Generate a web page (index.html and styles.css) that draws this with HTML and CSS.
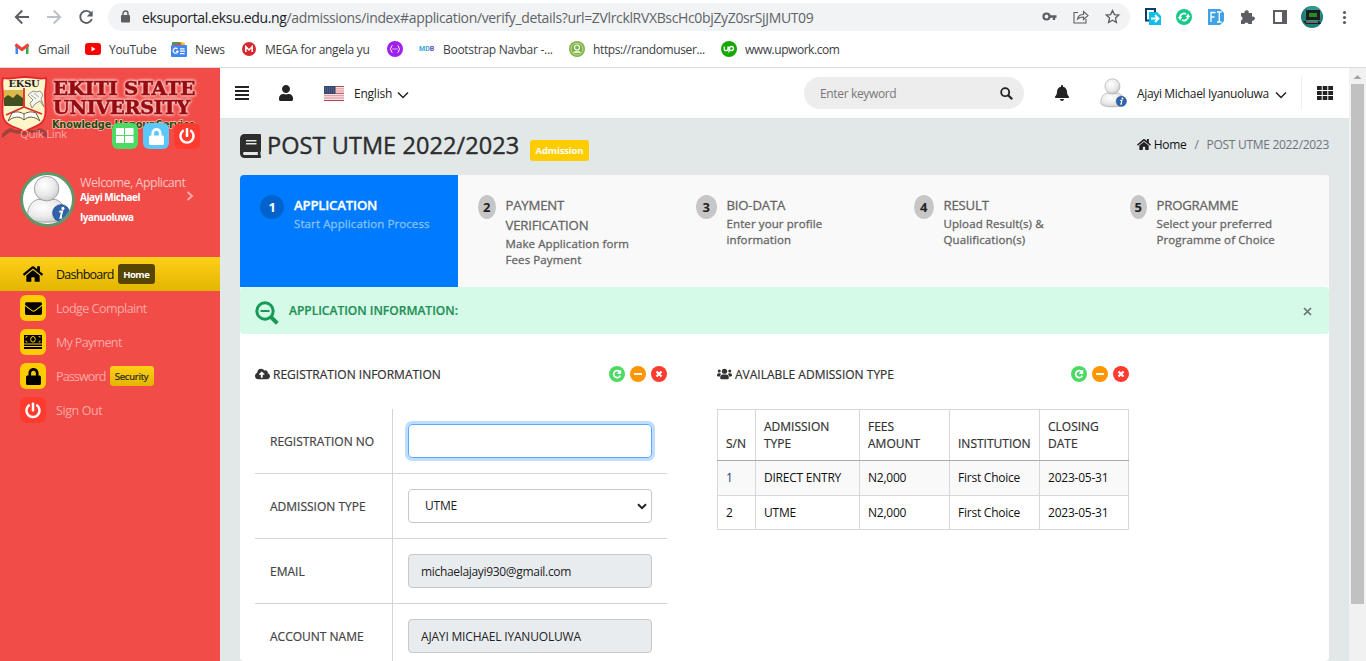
FILE: index.html
```html
<!DOCTYPE html>
<html lang="en">
<head>
<meta charset="utf-8">
<title>POST UTME 2022/2023</title>
<link rel="stylesheet" href="styles.css">
</head>
<body>
<svg class="defs" width="0" height="0">
  <symbol id="home" viewBox="0 0 576 512"><path d="M280.37 148.26L96 300.11V464a16 16 0 0 0 16 16l112.06-.29a16 16 0 0 0 15.92-16V368a16 16 0 0 1 16-16h64a16 16 0 0 1 16 16v95.64a16 16 0 0 0 16 16.05L464 480a16 16 0 0 0 16-16V300L295.67 148.26a12.19 12.19 0 0 0-15.3 0zM571.6 251.47L488 182.56V44.05a12 12 0 0 0-12-12h-56a12 12 0 0 0-12 12v72.61L318.47 43a48 48 0 0 0-61 0L4.34 251.47a12 12 0 0 0-1.6 16.9l25.5 31A12 12 0 0 0 45.15 301l235.22-193.74a12.19 12.19 0 0 1 15.3 0L530.9 301a12 12 0 0 0 16.9-1.6l25.5-31a12 12 0 0 0-1.7-16.93z"/></symbol>
  <symbol id="envelope" viewBox="0 0 512 512"><path d="M502.3 190.8c3.9-3.1 9.7-.2 9.7 4.7V400c0 26.5-21.5 48-48 48H48c-26.5 0-48-21.5-48-48V195.6c0-5 5.7-7.8 9.7-4.7 22.4 17.4 52.1 39.5 154.1 113.6 21.1 15.4 56.7 47.8 92.2 47.6 35.7.3 72-32.8 92.3-47.6 102-74.1 131.6-96.3 154-113.7zM256 320c23.2.4 56.6-29.2 73.4-41.4 132.7-96.3 142.8-104.7 173.4-128.7 5.8-4.5 9.2-11.5 9.2-18.9v-19c0-26.5-21.5-48-48-48H48c-26.5 0-48 21.5-48 48v19c0 7.4 3.4 14.3 9.2 18.9 30.6 23.9 40.7 32.4 173.4 128.7 16.8 12.2 50.2 41.8 73.4 41.4z"/></symbol>
  <symbol id="lock" viewBox="0 0 448 512"><path d="M400 224h-24v-72C376 68.2 307.8 0 224 0S72 68.2 72 152v72H48c-26.5 0-48 21.5-48 48v192c0 26.5 21.5 48 48 48h352c26.5 0 48-21.5 48-48V272c0-26.5-21.5-48-48-48zm-104 0H152v-72c0-39.7 32.3-72 72-72s72 32.3 72 72v72z"/></symbol>
  <symbol id="power" viewBox="0 0 512 512"><path d="M400 54.1c63 45 104 118.6 104 201.9 0 136.8-110.8 247.7-247.5 248C120 504.3 8.2 393 8 256.4 7.9 173.1 48.9 99.3 111.8 54.2c11.7-8.3 28-4.8 35 7.7L162.6 90c5.9 10.5 3.1 23.8-6.6 31-41.5 30.8-68 79.6-68 134.9-.1 92.3 74.5 168.1 168 168.1 91.6 0 168.6-74.2 168-169.1-.3-51.8-24.7-101.8-68.1-134-9.7-7.2-12.4-20.5-6.5-30.9l15.8-28.1c7-12.4 23.2-16.1 34.8-7.8zM296 264V24c0-13.3-10.7-24-24-24h-32c-13.3 0-24 10.7-24 24v240c0 13.3 10.7 24 24 24h32c13.3 0 24-10.7 24-24z"/></symbol>
  <symbol id="user" viewBox="0 0 448 512"><path d="M224 256c70.7 0 128-57.3 128-128S294.7 0 224 0 96 57.3 96 128s57.3 128 128 128zm89.6 32h-16.7c-22.2 10.2-46.9 16-72.9 16s-50.6-5.8-72.9-16h-16.7C60.2 288 0 348.2 0 422.4V464c0 26.5 21.5 48 48 48h352c26.5 0 48-21.5 48-48v-41.6c0-74.2-60.2-134.4-134.4-134.4z"/></symbol>
  <symbol id="bell" viewBox="0 0 448 512"><path d="M224 512c35.32 0 63.97-28.65 63.97-64H160.03c0 35.35 28.65 64 63.97 64zm215.39-149.71c-19.32-20.76-55.47-51.99-55.47-154.29 0-77.7-54.48-139.9-127.94-155.16V32c0-17.67-14.32-32-31.98-32s-31.98 14.33-31.98 32v20.84C118.56 68.1 64.08 130.3 64.08 208c0 102.3-36.15 133.53-55.47 154.29-6 6.45-8.66 14.16-8.61 21.71.11 16.4 12.98 32 32.1 32h383.8c19.12 0 32-15.6 32.1-32 .05-7.55-2.61-15.27-8.61-21.71z"/></symbol>
  <symbol id="book" viewBox="0 0 448 512"><path d="M448 360V24c0-13.3-10.7-24-24-24H96C43 0 0 43 0 96v320c0 53 43 96 96 96h328c13.3 0 24-10.7 24-24v-16c0-7.5-3.5-14.3-8.9-18.7-4.2-15.4-4.2-59.3 0-74.7 5.4-4.3 8.9-11.1 8.9-18.6zM128 134c0-3.3 2.7-6 6-6h212c3.3 0 6 2.7 6 6v20c0 3.3-2.7 6-6 6H134c-3.3 0-6-2.7-6-6v-20zm0 64c0-3.3 2.7-6 6-6h212c3.3 0 6 2.7 6 6v20c0 3.3-2.7 6-6 6H134c-3.3 0-6-2.7-6-6v-20zm253.4 250H96c-17.7 0-32-14.3-32-32 0-17.6 14.4-32 32-32h285.4c-1.9 17.1-1.9 46.9 0 64z"/></symbol>
  <symbol id="cloud" viewBox="0 0 640 512"><path d="M537.6 226.6c4.1-10.7 6.4-22.4 6.4-34.6 0-53-43-96-96-96-19.7 0-38.1 6-53.3 16.2C367 64.2 315.3 32 256 32c-88.4 0-160 71.6-160 160 0 2.7.1 5.4.2 8.1C40.2 219.8 0 273.2 0 336c0 79.5 64.5 144 144 144h368c70.7 0 128-57.3 128-128 0-61.9-44-113.6-102.4-125.4zM393.4 288H328v112c0 8.800-7.200 16-16 16h-48c-8.800 0-16-7.200-16-16V288h-65.400c-14.300 0-21.400-17.200-11.300-27.300l105.400-105.400c6.200-6.200 16.400-6.200 22.600 0l105.400 105.400c10.100 10.100 2.900 27.300-11.300 27.300z"/></symbol>
  <symbol id="users" viewBox="0 0 30 24"><circle cx="4.500" cy="6" r="3"/><circle cx="25.500" cy="6" r="3"/><circle cx="15" cy="6.500" r="5.200"/><path d="M0 15.500v-1.500a3.500 3.500 0 0 1 3.500-3.500h2.500l2.500 1.500a7 7 0 0 0-2.800 5H1.500zM30 15.500v-1.500a3.500 3.500 0 0 0-3.500-3.500H24l-2.500 1.500a7 7 0 0 1 2.800 5h4.200zM6.500 20.500v-2a5.500 5.500 0 0 1 5.500-5.500h6a5.500 5.500 0 0 1 5.500 5.500v2a2 2 0 0 1-2 2h-13a2 2 0 0 1-2-2z"/></symbol>
  <symbol id="person" viewBox="0 0 54 54">
    <radialGradient id="pg" cx=".4" cy=".35" r=".7"><stop offset="0" stop-color="#fff"/><stop offset=".6" stop-color="#eaeaea"/><stop offset="1" stop-color="#c9c9c9"/></radialGradient>
    <path d="M5 45c0-11 5-16 11-18h20c6 2 11 8 11 18 0 4-9 7-21 7S5 49 5 45z" fill="url(#pg)" stroke="#9b9b9b"/>
    <circle cx="26" cy="15" r="13.500" fill="url(#pg)" stroke="#9b9b9b"/>
    <circle cx="42" cy="42" r="9.500" fill="#2f62a9" stroke="#254d86" stroke-width=".6"/>
    <circle cx="44" cy="36.800" r="1.700" fill="#fff"/><path d="M40 40.500l3.200-.5-1.900 7 1.700-.4" fill="none" stroke="#fff" stroke-width="2"/>
  </symbol>
  <symbol id="chev" viewBox="0 0 12 8"><path d="M1 1.500l5 5 5-5" fill="none" stroke="#222" stroke-width="1.500"/></symbol>
  <symbol id="t-re" viewBox="0 0 16 16"><circle cx="8" cy="8" r="8" fill="#4cd964"/><path d="M11.300 9.600A3.500 3.500 0 1 1 10.600 5.600" fill="none" stroke="#fff" stroke-width="1.700"/><path d="M12.200 3.600V8H7.800z" fill="#fff"/></symbol>
  <symbol id="t-min" viewBox="0 0 16 16"><circle cx="8" cy="8" r="8" fill="#ff9500"/><path d="M4 8h8" stroke="#fff" stroke-width="2"/></symbol>
  <symbol id="t-x" viewBox="0 0 16 16"><circle cx="8" cy="8" r="8" fill="#ff3b30"/><path d="M5.500 5.500l5 5M10.500 5.500l-5 5" stroke="#fff" stroke-width="2.200"/></symbol>
</svg>

<div class="browser">
  <div class="toolbar">
    <svg class="nav" width="96" height="34" viewBox="0 0 96 34" fill="none" stroke-width="1.900">
      <path d="M29 17H16M22.300 10.500L15.800 17l6.500 6.500" stroke="#5b5f63"/>
      <path d="M47 17h13M53.700 10.500l6.500 6.500-6.500 6.500" stroke="#bdc0c4"/>
      <path d="M91 13.200a6 6 0 1 0 .9 5.800" stroke="#5b5f63"/><path d="M92.700 10.500v6h-6z" fill="#5b5f63"/>
    </svg>
    <div class="omnibox">
      <svg width="10" height="14" viewBox="0 0 10 14"><rect x="1" y="5" width="9" height="7.500" rx="1" fill="#5b5f63"/><path d="M3 6V3.500a2.500 2.500 0 0 1 5 0V6" fill="none" stroke="#5b5f63" stroke-width="1.400"/></svg>
      <span class="url"><b>eksuportal.eksu.edu.ng</b>/admissions/index#application/verify_details?url=ZVlrcklRVXBscHc0bjZyZ0srSjJMUT09</span>
      <svg class="omni-icons" width="80" height="18" viewBox="0 0 80 18" fill="none" stroke="#5b5f63" stroke-width="1.100">
        <circle cx="5.500" cy="8.500" r="3" stroke-width="2.200"/><path d="M8 8.500h7.500M13 8.500v3.500" stroke-width="2.400"/>
        <path d="M37 4.500h-4v10.500h12v-4M36.500 11c.5-3 3-4.500 6-4.500v-3l4.500 4-4.500 4v-2.500c-3 0-4.500.5-6 2z"/>
        <path d="M71.500 2.500l1.900 4.100 4.400.5-3.300 3 .9 4.400-3.900-2.200-3.900 2.200.9-4.400-3.300-3 4.400-.5z" stroke-width="1.300"/>
      </svg>
    </div>
    <svg class="ext" width="216" height="34" viewBox="0 0 216 34">
      <path d="M5 9h10v4M6 8.500v12h3" fill="none" stroke="#0b3f69" stroke-width="2"/><path d="M9 12h8l4 4v9H9z" fill="#0cbfe9"/><path d="M11 18.500h7M15 15l3.500 3.500L15 22" fill="none" stroke="#fff" stroke-width="1.800"/>
      <circle cx="44" cy="17" r="8" fill="#15c98a"/><path d="M40 18v-1a4 4 0 0 1 6-3M48 16v1a4 4 0 0 1-6 3" fill="none" stroke="#fff" stroke-width="1.900"/><path d="M37.800 17h4.500L40 20.500zM45.800 17h4.500L48 13.500z" fill="#fff"/>
      <path d="M68 9h12l4 4v8l-4 4H68z" fill="#3fa2e6"/><path d="M71 22V12.500h4.500M71 17h3.500M77 12h4.500M79.300 12v10M77 22h4.500" fill="none" stroke="#fff" stroke-width="1.300"/>
      <path d="M101 13h3.500a2.200 2.200 0 1 1 4.200 0h3.300v3.500a2.200 2.200 0 1 1 0 4.200V24h-3.500a2.200 2.200 0 0 0-4.200 0H101v-3.500a2.200 2.200 0 0 0 0-4.200z" fill="#5b5f63"/>
      <path d="M134 11h12v12h-12z" fill="none" stroke="#5b5f63" stroke-width="2"/><path d="M142 10h5v14h-5z" fill="#5b5f63"/>
      <circle cx="172" cy="17" r="11" fill="#217d78"/><circle cx="173" cy="14" r="8" fill="#2f9a92"/><path d="M166 10h14v10h-14zM163 21h16l2 3h-15z" fill="#1b1d1f"/><path d="M169 13h8v4h-8z" fill="#248c20"/><path d="M166 22h12" stroke="#bbb" stroke-width="1"/>
      <g fill="#5b5f63"><circle cx="204.500" cy="12.500" r="1.600"/><circle cx="204.500" cy="17.500" r="1.600"/><circle cx="204.500" cy="22.500" r="1.600"/></g>
    </svg>
  </div>
  <div class="bookmarks">
    <a class="bm gm"><svg width="16" height="16" viewBox="0 0 16 16"><path d="M1.500 3v10h2.500V7z" fill="#4285f4"/><path d="M14.500 3v10H12V7z" fill="#34a853"/><path d="M1.500 3.500l6.500 5 6.500-5" fill="none" stroke="#ea4335" stroke-width="3"/></svg><span>Gmail</span></a>
    <a class="bm yt"><svg width="16" height="16" viewBox="0 0 16 16"><rect y="2" width="16" height="12" rx="3" fill="#f00"/><path d="M6.500 5.500v5l4-2.500z" fill="#fff"/></svg><span>YouTube</span></a>
    <a class="bm nw"><svg width="16" height="16" viewBox="0 0 16 16"><path d="M1 1h10v4H1z" fill="#34a853"/><path d="M9 1l5 1-1 4H9z" fill="#fbbc04"/><path d="M2 3l8-1v3H2z" fill="#ea4335"/><rect y="4" width="16" height="12" rx="1" fill="#4285f4"/><path d="M6.500 8a2.500 2.500 0 1 0 .6 2.300H5M9 7.800h4.500M9 10.200h5M9 12.600h4.500" stroke="#fff" stroke-width="1.200" fill="none"/></svg><span>News</span></a>
    <a class="bm mg"><svg width="16" height="16" viewBox="0 0 16 16"><circle cx="8" cy="8" r="7" fill="#d9272e"/><path d="M4.800 11V5.700L8 9l3.200-3.300V11" fill="none" stroke="#fff" stroke-width="1.500"/></svg><span>MEGA for angela yu</span></a>
    <a class="bm sw"><svg width="16" height="16" viewBox="0 0 16 16"><circle cx="8" cy="8" r="8" fill="#a020f0"/><path d="M5.500 4.500c-2 0-.5 3-2.300 3.500 1.800.5.300 3.500 2.300 3.500M10.500 4.500c2 0 .5 3 2.300 3.500-1.800.5-.3 3.500-2.300 3.500" fill="none" stroke="#fff"/><path d="M5.500 8h5" stroke="#fff" stroke-width="1.200" stroke-dasharray="1.200 .7"/></svg></a>
    <a class="bm bs"><em>MD<i>B</i></em><span>Bootstrap Navbar -...</span></a>
    <a class="bm ru"><svg width="16" height="16" viewBox="0 0 16 16"><circle cx="8" cy="8" r="8" fill="#7cb342"/><circle cx="8" cy="8" r="6" fill="none" stroke="#dcedc8" stroke-width=".7"/><circle cx="8" cy="6.500" r="2.500" fill="none" stroke="#fff" stroke-width="1.200"/><path d="M4 12c1-3 7-3 8 0z" fill="#e5f2d5"/></svg><span>https://randomuser...</span></a>
    <a class="bm up"><svg width="16" height="16" viewBox="0 0 16 16"><circle cx="8" cy="8" r="8" fill="#14a800"/><path d="M3.200 5.500v2.300a1.900 1.900 0 0 0 3.800 0V5.500c.5 2 1.500 4 3.500 4a2 2 0 1 0-2-2L7.800 11.500" fill="none" stroke="#fff" stroke-width="1.300"/></svg><span>www.upwork.com</span></a>
  </div>
</div>

<div class="page">
  <aside class="sidebar">
    <div class="brand">
      <svg width="220" height="72" viewBox="0 0 220 72">
        <path d="M2 70c-1-5 3-8 9-10l4 2h20l5-2c6 2 8 5 7 10l-8-6-15 3-14-3z" fill="#a2403c"/>
        <path d="M3 10c8 2 13-1 22-1s14 3 21 1c1 6-1 9-1 16 0 14 3 24-5 30-5 4-11 4-15 8-5-4-12-4-17-8-8-6-5-16-5-30 0-7-2-10 0-16z" fill="#fdf6c9" stroke="#e4252c" stroke-width="1.800"/>
        <path d="M4 22h20v16H4z" fill="#dcb74a"/><path d="M4 38v-8l4-3 5 3 4-4 6 4v8z" fill="#43501f"/>
        <path d="M24 20v19L6 47M24 39l18 7" stroke="#e02a2a" stroke-width="1.800" fill="none"/>
        <path d="M28 27l5-4 4 1 3-1 3 4-2 4 3 8-4-6-5 3-3 4-2-5 3-3z" fill="#f6f6ee" stroke="#777" stroke-width=".8"/><path d="M31 27l5 4M34 25l5 4" stroke="#888" stroke-width=".7"/>
        <path d="M8 53c6-5 12-5 16-1 4-4 10-4 16 1l-4-8c-5-2-8-1-12 1-4-2-7-3-12-1z" fill="#fff" stroke="#55451a" stroke-width=".9"/><path d="M24 46v6" stroke="#55451a" stroke-width=".8"/>
        <text x="24" y="18.500" text-anchor="middle" textLength="31" lengthAdjust="spacingAndGlyphs" class="crest">EKSU</text>
        <g class="glow"><text x="53" y="26.500" textLength="142" lengthAdjust="spacingAndGlyphs" class="uni">EKITI STATE</text>
        <text x="53" y="46" textLength="137" lengthAdjust="spacingAndGlyphs" class="uni">UNIVERSITY</text></g>
        <text x="52" y="60" textLength="143" lengthAdjust="spacingAndGlyphs" class="motto">Knowledge.Honour.Service</text>
      </svg>
    </div>
    <div class="quick"><span>Quik Link</span>
      <i class="tile green"><svg width="18" height="18" viewBox="0 0 18 18" fill="#fff"><path d="M0 1h8v7H0zM9 1h8.500v7H9zM0 9h8v7H0zM9 9h8.500v7H9z"/></svg></i>
      <i class="tile blue"><svg width="15" height="17" fill="#fff"><use href="#lock"/></svg></i>
      <i class="tile red"><svg width="16" height="16" fill="#fff"><use href="#power"/></svg></i>
    </div>
    <div class="profile">
      <div class="avatar"><svg width="49" height="49"><use href="#person"/></svg></div>
      <div class="who"><p class="wel">Welcome, Applicant</p><p class="nm">Ajayi Michael<br>Iyanuoluwa</p></div>
      <svg class="arrow" width="8" height="10" viewBox="0 0 8 10"><path d="M1.500 1l4.500 4-4.500 4" fill="none" stroke="#f9a9a5" stroke-width="2"/></svg>
    </div>
    <nav>
      <a class="item on"><i class="tile"><svg width="20" height="18"><use href="#home"/></svg></i><span class="n1">Dashboard</span><b class="tag dark">Home</b></a>
      <a class="item"><i class="tile gold"><svg width="17" height="17"><use href="#envelope"/></svg></i><span class="n2">Lodge Complaint</span></a>
      <a class="item"><i class="tile gold"><svg width="18" height="14" viewBox="0 0 18 14"><path d="M0 0h18v8.500H0zM0 9.500h18v1.500H0zM0 12h18v2H0z"/><ellipse cx="9" cy="4.300" rx="2.300" ry="2.800" fill="none" stroke="#fc0"/><path d="M2 3V1.500h1.500M2 5.500V7h1.500M16 3V1.500h-1.500M16 5.500V7h-1.500" fill="none" stroke="#fc0" stroke-width=".8"/></svg></i><span class="n3">My Payment</span></a>
      <a class="item"><i class="tile gold"><svg width="15" height="17"><use href="#lock"/></svg></i><span class="n4">Password</span><b class="tag sec">Security</b></a>
      <a class="item"><i class="tile red"><svg width="16" height="17" fill="#fff"><use href="#power"/></svg></i><span class="n5">Sign Out</span></a>
    </nav>
  </aside>

  <main class="main">
    <header class="top">
      <svg class="burger" width="14" height="14" viewBox="0 0 14 14"><path d="M0 1h14M0 5h14M0 9h14M0 13h14" stroke="#222" stroke-width="2"/></svg>
      <svg class="usr" width="14" height="16" fill="#222"><use href="#user"/></svg>
      <svg class="flag" width="20" height="15" viewBox="0 0 20 15"><rect width="20" height="15" fill="#f3e3e5"/><path d="M0 .5h20M0 7.300h20M0 14.500h20" stroke="#b8474f"/><path d="M0 2.800h20M0 5h20M0 9.700h20M0 12h20" stroke="#dd8f96"/><rect width="11.500" height="8" fill="#35466f"/><path d="M1 2h10M1 4h10M1 6h10" stroke="#8390ad" stroke-width=".7" stroke-dasharray="1 1"/></svg>
      <span class="lang">English</span><svg class="c1" width="12" height="8"><use href="#chev"/></svg>
      <div class="search"><span>Enter keyword</span><svg width="13" height="13" viewBox="0 0 13 13" fill="none" stroke="#222"><circle cx="5.200" cy="5.200" r="4" stroke-width="1.800"/><path d="M8.200 8.200l4 4" stroke-width="2.200"/></svg></div>
      <svg class="bell" width="14" height="16" fill="#222"><use href="#bell"/></svg>
      <svg class="pic" width="30" height="30"><use href="#person"/></svg>
      <span class="acct">Ajayi Michael Iyanuoluwa</span><svg class="c2" width="12" height="8"><use href="#chev"/></svg>
      <div class="sep"></div>
      <svg class="grid" width="16" height="14" viewBox="0 0 16 14" fill="#222"><path d="M0 0h4.700v4H0zM5.700 0h4.600v4H5.700zM11.300 0H16v4h-4.700zM0 5h4.700v4H0zM5.700 5h4.600v4H5.700zM11.300 5H16v4h-4.700zM0 10h4.700v4H0zM5.700 10h4.600v4H5.700zM11.300 10H16v4h-4.700z"/></svg>
    </header>
    <div class="titlebar">
      <svg width="21" height="24" fill="#2d2d2d"><use href="#book"/></svg>
      <h1>POST UTME 2022/2023</h1><b class="adm">Admission</b>
      <div class="crumbs"><svg width="14" height="13" fill="#222"><use href="#home"/></svg><span class="ch">Home</span><span class="sl">/</span><span class="cp">POST UTME 2022/2023</span></div>
    </div>
    <section class="card">
      <div class="steps">
        <div class="step on s1"><b>1</b><div><h4>APPLICATION</h4><p>Start Application Process</p></div></div>
        <div class="step s2"><b>2</b><div><h4>PAYMENT<br>VERIFICATION</h4><p>Make Application form<br>Fees Payment</p></div></div>
        <div class="step s3"><b>3</b><div><h4>BIO-DATA</h4><p>Enter your profile<br>information</p></div></div>
        <div class="step s4"><b>4</b><div><h4>RESULT</h4><p>Upload Result(s) &amp;<br>Qualification(s)</p></div></div>
        <div class="step s5"><b>5</b><div><h4>PROGRAMME</h4><p>Select your preferred<br>Programme of Choice</p></div></div>
      </div>
      <div class="alert">
        <svg width="24" height="25" viewBox="0 0 24 25" fill="none" stroke="#169b56"><circle cx="10" cy="10" r="8.200" stroke-width="3"/><path d="M16 16l6.300 6.300" stroke-width="4"/><path d="M5.500 10h9" stroke-width="2"/></svg>
        <strong>APPLICATION INFORMATION:</strong>
        <svg class="close" width="9" height="9" viewBox="0 0 9 9"><path d="M1 1l7 7M8 1L1 8" stroke="#66796f" stroke-width="1.700"/></svg>
      </div>
      <div class="cols">
        <div class="col">
          <div class="head"><svg width="15" height="12"><use href="#cloud"/></svg><span>REGISTRATION INFORMATION</span><svg width="16" height="16"><use href="#t-re"/></svg><svg width="16" height="16"><use href="#t-min"/></svg><svg width="16" height="16"><use href="#t-x"/></svg></div>
          <div class="form">
            <div class="fr"><label>REGISTRATION NO</label><div class="cell"><div class="input focus"></div></div></div>
            <div class="fr"><label>ADMISSION TYPE</label><div class="cell"><div class="input select"><span>UTME</span><svg width="10" height="7" viewBox="0 0 10 7"><path d="M1 1.200l4 4 4-4" fill="none" stroke="#222" stroke-width="2"/></svg></div></div></div>
            <div class="fr"><label>EMAIL</label><div class="cell"><div class="input off em">michaelajayi930@gmail.com</div></div></div>
            <div class="fr"><label>ACCOUNT NAME</label><div class="cell"><div class="input off">AJAYI MICHAEL IYANUOLUWA</div></div></div>
          </div>
        </div>
        <div class="col">
          <div class="head"><svg width="15" height="12"><use href="#users"/></svg><span>AVAILABLE ADMISSION TYPE</span><svg width="16" height="16"><use href="#t-re"/></svg><svg width="16" height="16"><use href="#t-min"/></svg><svg width="16" height="16"><use href="#t-x"/></svg></div>
          <table>
            <colgroup><col class="w1"><col class="w2"><col class="w3"><col class="w4"><col class="w5"></colgroup>
            <thead><tr><th>S/N</th><th>ADMISSION<br>TYPE</th><th>FEES<br>AMOUNT</th><th>INSTITUTION</th><th>CLOSING<br>DATE</th></tr></thead>
            <tbody>
              <tr class="alt"><td class="num">1</td><td>DIRECT ENTRY</td><td>N2,000</td><td>First Choice</td><td>2023-05-31</td></tr>
              <tr><td>2</td><td>UTME</td><td>N2,000</td><td>First Choice</td><td>2023-05-31</td></tr>
            </tbody>
          </table>
        </div>
      </div>
    </section>
  </main>
  <div class="scroll"><svg width="17" height="16" viewBox="0 0 17 16"><path d="M4.500 11h8l-4-4z" fill="#a3a3a3"/></svg><div class="thumb"></div></div>
</div>
</body>
</html>
```
FILE: styles.css
```css
* { box-sizing: border-box; margin: 0; padding: 0; }
html, body { width: 1366px; height: 661px; overflow: hidden; }
body { font: 12px "Open Sans", "Noto Sans", sans-serif; color: #222; background: #fff; letter-spacing: -.23px; }
svg { display: block; flex: none; }
.defs { position: absolute; }
span, h1, strong, label, b { white-space: nowrap; }

.browser { height: 68px; border-bottom: 1px solid #dadce0; }
.toolbar { height: 34px; display: flex; align-items: center; }
.nav { margin-right: 12px; }
.omnibox { width: 1022px; height: 28px; border-radius: 14px; background: #f1f3f4; display: flex; align-items: center; padding: 0 9px 0 12px; }
.url { margin-left: 12px; font-size: 14px; color: #5f6368; letter-spacing: -.35px; }
.url b { font-weight: 400; color: #202124; }
.omni-icons { margin-left: auto; overflow: visible; }
.ext { margin-left: 10px; }
.bookmarks { height: 30px; display: flex; align-items: center; padding-left: 14px; color: #3c4043; font-size: 12px; letter-spacing: -.28px; }
.bm { display: flex; align-items: center; gap: 8px; }
.gm { width: 71px; letter-spacing: -.2px; } .yt { width: 86px; } .nw { width: 70px; } .mg { width: 146px; } .sw { width: 32px; } .bs { width: 150px; } .ru { width: 152px; letter-spacing: -.38px; } .up { letter-spacing: -.45px; }
.bm em { width: 16px; font: 700 7px Roboto, sans-serif; color: #39a9dc; letter-spacing: 0; }
.bm em i { font-style: normal; color: #6a4fc0; }

.page { height: 593px; display: flex; }
.sidebar { width: 220px; background: #f14c48; overflow: hidden; }
.brand { height: 52px; }
.crest { font: 700 9px "DejaVu Serif", serif; fill: #222; }
.glow { filter: drop-shadow(0 0 1.500px #ffd9d7) drop-shadow(0 0 1px #ffe9e7); }
.uni { font: 700 19px "DejaVu Serif", serif; fill: #970b10; stroke: #970b10; stroke-width: .6px; }
.motto { font: 700 10px "DejaVu Sans", sans-serif; fill: #23480f; stroke: #fbc0ae; stroke-width: 1.500px; paint-order: stroke; }
.quick { position: relative; height: 32px; display: flex; align-items: center; gap: 5px; padding-left: 20px; color: #f9a5a2; }
.quick span { width: 87px; font-size: 11.500px; margin-top: -6px; letter-spacing: -.35px; }
.tile { width: 26px; height: 26px; border-radius: 6px; display: flex; align-items: center; justify-content: center; flex: none; }
.green { background: #4cd964; } .blue { background: #5ac8fa; } .red { background: #ff3b30; } .gold { background: #fc0; }
.profile { height: 105px; padding: 20px 0 0 20px; display: flex; }
.avatar { width: 55px; height: 55px; border-radius: 50%; border: 3px solid #61966a; background: #fff; display: flex; align-items: center; justify-content: center; overflow: hidden; }
.who { width: 111px; padding-left: 5px; }
.wel { font-size: 12.500px; line-height: 17px; padding-top: 2px; color: #fbc3c0; white-space: nowrap; letter-spacing: -.53px; }
.nm { font-size: 10px; font-weight: 700; line-height: 20px; color: #fff; margin-top: -4px; letter-spacing: -.5px; }
.arrow { margin-top: 19px; }
.item { height: 34px; display: flex; align-items: center; padding-left: 20px; color: #fba9a5; font-size: 12.500px; }
.item span { margin-left: 10px; }
.n1 { letter-spacing: -.75px; } .n2 { letter-spacing: -.53px; } .n3 { letter-spacing: -.65px; } .n4 { letter-spacing: -.85px; } .n5 { letter-spacing: -.4px; }
.item.on { background: linear-gradient(#ffd01a, #e2b500); color: #111; }
.tag { font-size: 9.500px; height: 20px; width: 37px; text-align: center; border-radius: 3px; line-height: 21px; margin-left: 4px; letter-spacing: -.5px; }
.dark { background: #574503; color: #fff; }
.sec { width: 44px; background: linear-gradient(#ffd01a, #e2b500); color: #222; font-weight: 400; letter-spacing: -.2px; -webkit-text-stroke: .2px; }

.main { width: 1129px; background: #e2e7e8; }
.top { height: 51px; background: #fff; border-bottom: 1px solid #dfe3e4; display: flex; align-items: center; padding-left: 15px; }
.usr { margin-left: 30px; }
.flag { margin-left: 31px; }
.lang { margin-left: 10px; width: 43px; }
.c1 { margin-top: 3px; }
.search { margin-left: 395px; width: 220px; height: 32px; border-radius: 16px; background: #ededed; display: flex; align-items: center; justify-content: space-between; padding: 0 11px 0 16px; color: #777; letter-spacing: -.35px; }
.bell { margin-left: 31px; }
.pic { margin-left: 29px; }
.acct { margin-left: 9px; width: 138px; letter-spacing: -.35px; }
.c2 { margin-top: 3px; }
.sep { width: 1px; height: 34px; background: #f0f0f0; margin: 0 15px 0 14px; }
.titlebar { height: 56px; padding: 0 20px; display: flex; align-items: center; }
.titlebar > svg { margin-top: -3px; }
h1 { font-size: 23.500px; font-weight: 400; color: #2d2d2d; margin: -5px 0 0 6px; width: 254px; letter-spacing: .07px; -webkit-text-stroke: .4px; }
.adm { margin: 7px 0 0 9px; height: 21px; background: #fc0; color: #fff; border-radius: 3px; line-height: 21px; font-size: 9.500px; width: 59px; text-align: center; letter-spacing: -.15px; }
.crumbs { margin: -6px 0 0 auto; display: flex; align-items: center; color: #6c757d; letter-spacing: -.3px; }
.ch { color: #111; margin-left: 3px; }
.sl { margin: 0 8px; }

.card { margin: 0 20px; height: 486px; background: #fff; border-radius: 4px; overflow: hidden; }
.steps { display: grid; grid-template-columns: 217.500px 218px 218px 216px 219.500px; height: 112px; background: #f9f9f9; }
.step { display: flex; padding: 20px 0 0 20px; color: #666; }
.step b { width: 24px; height: 24px; border-radius: 50%; background: #c6c6c6; color: #222; text-align: center; font-size: 13px; line-height: 24px; margin-right: 10px; flex: none; }
.step h4 { font-size: 13.200px; font-weight: 400; line-height: 20px; letter-spacing: -.2px; -webkit-text-stroke: .3px; }
.step p { font-size: 11.500px; line-height: 16px; margin-top: 1px; letter-spacing: .1px; white-space: nowrap; -webkit-text-stroke: .3px; }
.step.on { background: #007bff; color: #fff; }
.step.on h4 { font-weight: 600; }
.step.on b { background: #0062cc; color: #fff; }
.step.on p { color: #85c0ff; }
.s2 b { width: 18px; } .s3 b { width: 21px; } .s4 b { width: 20px; } .s5 b { width: 17px; }
.alert { height: 47px; background: #d5fae7; border-radius: 4px; display: flex; align-items: flex-start; padding: 14px 17px 0 15px; }
.alert strong { color: #1f8f55; font-size: 12px; line-height: 19px; font-weight: 600; margin-left: 10px; letter-spacing: 0; -webkit-text-stroke: .2px; }
.close { margin: 6px 0 0 auto; }
.cols { display: flex; gap: 50px; padding: 32px 15px 0; }
.col { width: 412px; }
.head { display: flex; height: 16px; align-items: center; gap: 5px; margin-bottom: 27px; color: #333; fill: #333; letter-spacing: 0; }
.head span { margin-left: -2px; margin-right: auto; -webkit-text-stroke: .2px; }
.fr { height: 65px; display: flex; border-bottom: 1px solid #d5d5d5; }
.fr label { width: 138px; border-right: 1px solid #d5d5d5; padding-left: 15px; line-height: 65px; color: #444; letter-spacing: 0; -webkit-text-stroke: .2px; }
.cell { padding: 15px; }
.input { width: 244px; height: 34px; border: 1px solid #c5c9cc; border-radius: 4px; padding: 0 12px; line-height: 34px; letter-spacing: -.18px; }
.em { letter-spacing: -.32px; }
.off { background: #e9ecef; }
.focus { border-color: #5aabff; box-shadow: 0 0 0 3px #bfdeff; }
.select { display: flex; align-items: center; justify-content: space-between; padding: 0 4px 0 16px; }
table { width: 412px; border-collapse: collapse; table-layout: fixed; }
.w1 { width: 38px; } .w2 { width: 104px; } .w3 { width: 90px; } .w4 { width: 90px; } .w5 { width: 89px; }
th, td { border: 1px solid #d8d8d8; padding-left: 8px; text-align: left; white-space: nowrap; }
th { height: 51px; vertical-align: bottom; padding-bottom: 8px; line-height: 17px; font-weight: 400; color: #333; border-bottom-color: #aaa; letter-spacing: 0; -webkit-text-stroke: .2px; }
td { height: 34.500px; color: #111; }
td.num { color: #14457c; }
.alt td { background: #f9f9f9; }
.scroll { width: 17px; background: #f1f1f1; }
.thumb { width: 13px; height: 520px; background: #c1c1c1; margin-left: 2px; }
```
